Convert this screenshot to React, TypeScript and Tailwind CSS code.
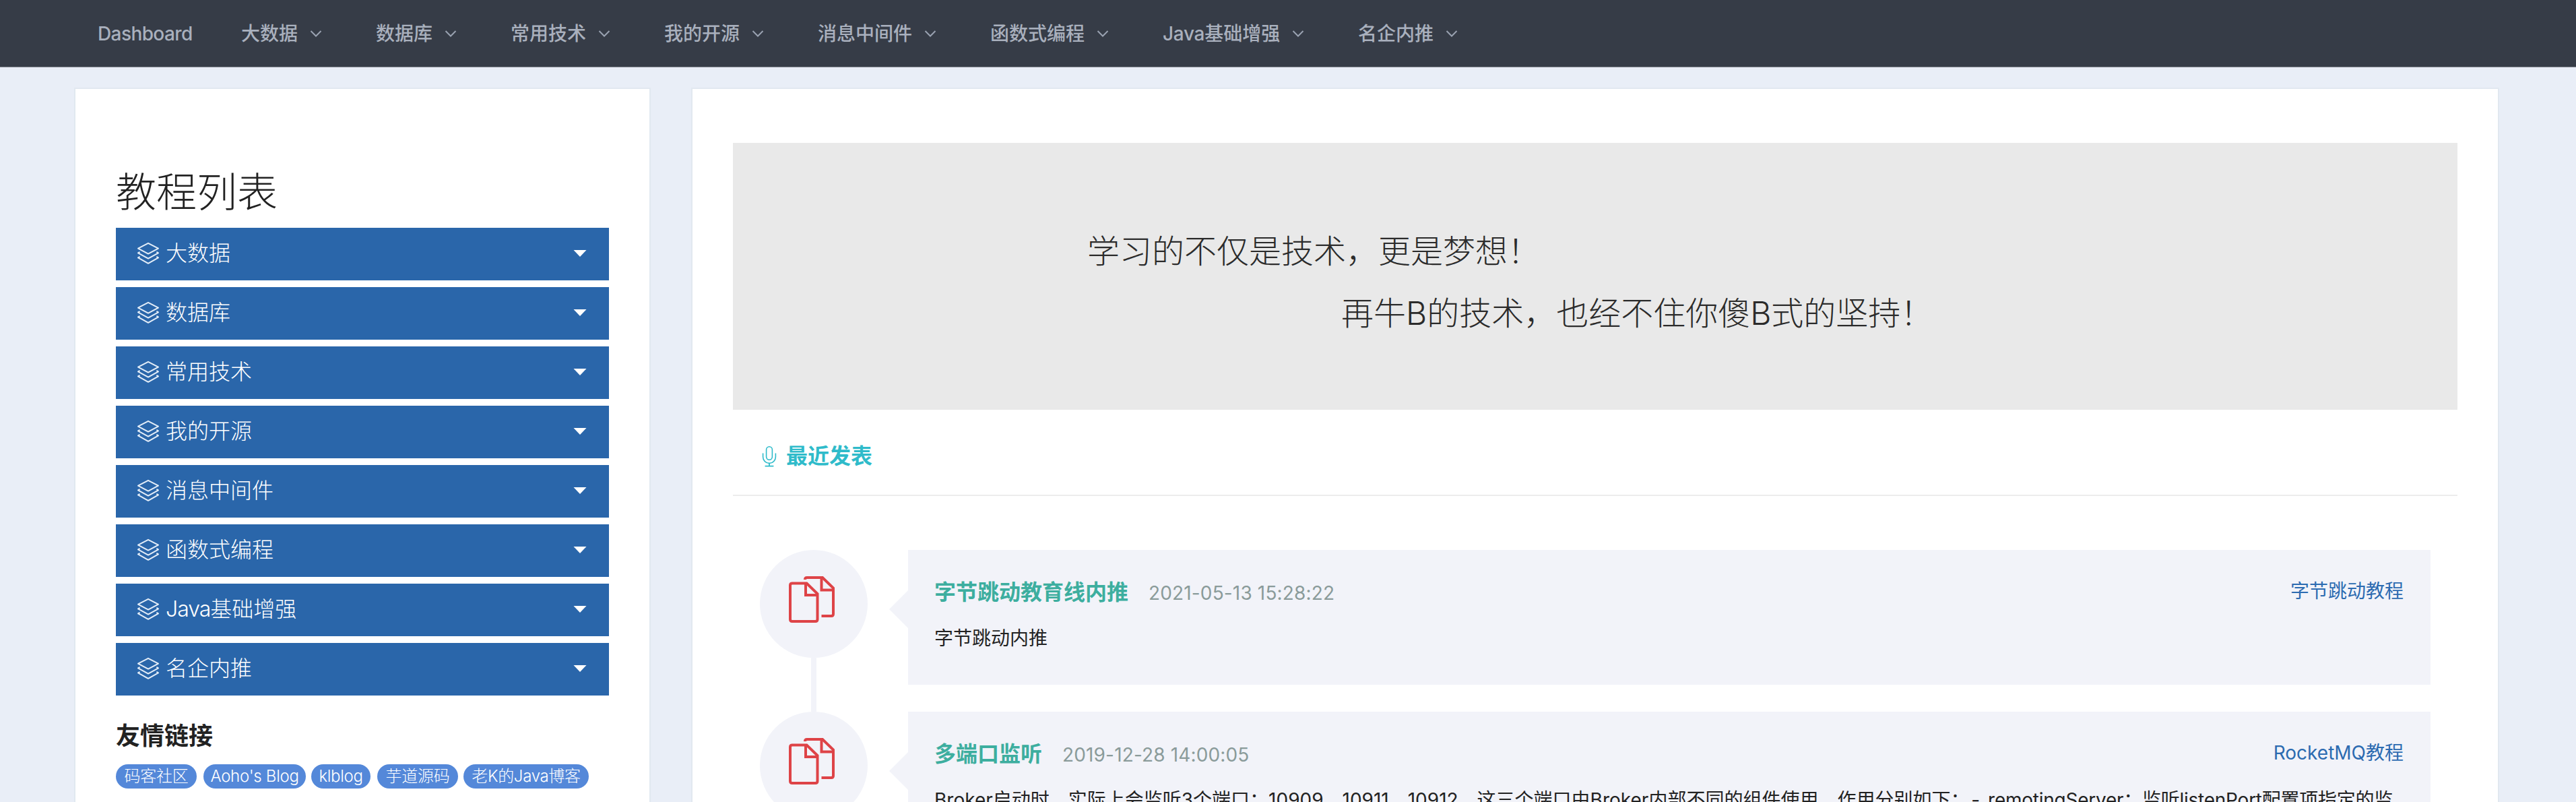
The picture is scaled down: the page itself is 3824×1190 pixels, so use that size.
import React from "react";

type NavItem = { latin?: string; label: string; width: string };

const navItems: NavItem[] = [
  { label: "大数据", width: "w-[84px]" },
  { label: "数据库", width: "w-[84px]" },
  { label: "常用技术", width: "w-[112px]" },
  { label: "我的开源", width: "w-[112px]" },
  { label: "消息中间件", width: "w-[140px]" },
  { label: "函数式编程", width: "w-[140px]" },
  { latin: "Java", label: "基础增强", width: "w-[174px]" },
  { label: "名企内推", width: "w-[112px]" },
];

const links = [
  { label: "码客社区", box: "w-[120px] mr-[10px]" },
  { label: "Aoho's Blog", box: "w-[152px] mr-[8px]" },
  { label: "klblog", box: "w-[88px] mr-[10px]" },
  { label: "芋道源码", box: "w-[120px] mr-[8px]" },
  { label: "老K的Java博客", box: "w-[186px]" },
];

const posts = [
  {
    title: "字节跳动教育线内推",
    date: "2021-05-13 15:28:22",
    category: "字节跳动教程",
    body: <>字节跳动内推</>,
  },
  {
    title: "多端口监听",
    date: "2019-12-28 14:00:05",
    category: "RocketMQ教程",
    body: (
      <>
        Broker启动时，实际上会监听3个端口：10909、10911、10912，这三个端口由Broker内部不同的组件使用，作用分别如下
        <span className="tracking-[-5px]">：</span> <span className="tracking-[4px]">-</span>{" "}
        <span className="tracking-[-0.25px]">remotingServer：监听listenPort配置项指定的监</span>
      </>
    ),
  },
];

function ChevronIcon() {
  return (
    <svg className="ml-[18px] h-[12px] w-[18px]" viewBox="0 0 18 12" fill="none" stroke="#9aa3b2" strokeWidth="2">
      <path d="M1.5 2 L9 9.5 L16.5 2" />
    </svg>
  );
}

function LayersIcon() {
  return (
    <svg className="h-[34px] w-[34px]" viewBox="0 0 34 34" fill="none" stroke="#e3edf8" strokeWidth="2" strokeLinejoin="round">
      <path d="M17 1.8 L32 9.6 L17 17.6 L2 9.6 Z" />
      <path d="M4.6 14.8 L2 16.4 L17 24.6 L32 16.4 L29.4 14.8" />
      <path d="M4.6 21.8 L2 23.4 L17 31.8 L32 23.4 L29.4 21.8" />
    </svg>
  );
}

function MicIcon() {
  return (
    <svg className="h-[32px] w-[22px]" viewBox="0 0 22 32" fill="none" stroke="#2fbbca" strokeWidth="1.6">
      <rect x="6.6" y="1.8" width="8.8" height="19.4" rx="4.4" />
      <path d="M1.6 11.5 V17 A9.4 9.4 0 0 0 20.4 17 V11.5" />
      <path d="M11 26.5 V30.4 M4.6 30.6 H17.4" strokeWidth="1.8" />
    </svg>
  );
}

function CopyIcon() {
  return (
    <svg className="h-[70px] w-[70px]" viewBox="0 0 70 70" fill="none" stroke="#de4347" strokeWidth="4">
      <path d="M5 10.5 H27.5 L43.5 26 V64 Q43.5 67 40.5 67 H6 Q3 67 3 64 V13.5 Q3 10.5 6 10.5 Z" />
      <path d="M26 10.5 V28 H44" />
      <path d="M25 5 Q25 2 28 2 H51 L67 17.5 V56 Q67 59 64 59 H49.5" />
      <path d="M49.5 2 V20.5 H67" />
    </svg>
  );
}

function TopNav() {
  return (
    <nav className="flex h-[100px] shrink-0 items-center border-b border-[#8d9199] bg-[#363c47] pt-px pl-[145px] text-[28px] leading-[40px] font-medium text-[#a9b0bd]">
      <a className="w-[213px] tracking-[-0.6px]">Dashboard</a>
      {navItems.map((item) => (
        <a key={item.label} className="mr-[80px] flex items-center">
          <span className={`${item.width} whitespace-nowrap`}>
            {item.latin && <span className="tracking-[-0.3px]">{item.latin}</span>}
            {item.label}
          </span>
          <ChevronIcon />
        </a>
      ))}
    </nav>
  );
}

function Sidebar() {
  return (
    <aside className="h-[1200px] w-[856px] shrink-0 border-2 border-[#e1e8f0] bg-white px-[60px] pt-[113px] text-[#222]">
      <h1 className="h-[93px] text-[60px] leading-[80px] font-light">教程列表</h1>
      <ul className="flex flex-col gap-[10px]">
        {navItems.map((item) => (
          <li
            key={item.label}
            className="flex h-[78px] items-center bg-[#2a66aa] pr-[33px] pb-[2px] pl-[31px] text-[32px] leading-[48px] font-light text-white"
          >
            <LayersIcon />
            <span className="ml-[9px] grow">
              {item.latin && <span className="tracking-[-1px]">{item.latin}</span>}
              {item.label}
            </span>
            <svg className="h-[10px] w-[20px]" viewBox="0 0 20 10" fill="white">
              <path d="M0.5 0 H19.5 L10 10 Z" />
            </svg>
          </li>
        ))}
      </ul>
      <h2 className="mt-[35px] text-[36px] leading-[50px] font-bold">友情链接</h2>
      <div className="mt-[17px] flex text-[24px] leading-[36px] font-light text-white">
        {links.map((link) => (
          <a key={link.label} className={`${link.box} h-[36px] rounded-full bg-[#5488d9] text-center tracking-[-0.3px] whitespace-nowrap`}>
            {link.label}
          </a>
        ))}
      </div>
    </aside>
  );
}

function Post({ post, last }: { post: (typeof posts)[number]; last: boolean }) {
  return (
    <article className="flex h-[240px]">
      <div className="flex w-[160px] flex-col items-center">
        <div className="flex h-[160px] w-[160px] shrink-0 items-center justify-center rounded-full bg-[#f2f3f9] pr-[6px] pb-[12px]">
          <CopyIcon />
        </div>
        {!last && <div className="h-[80px] w-[8px] bg-[#f2f3f9]" />}
      </div>
      <svg className="mt-[60px] ml-[32px] h-[56px] w-[28px]" viewBox="0 0 28 56" fill="#f2f3f9">
        <path d="M28 0 V56 L0 28 Z" />
      </svg>
      <div className="h-[200px] w-[2260px] bg-[#f2f3f9] pt-[39px] pr-[40px] pl-[39px] text-[28px] leading-[48px] text-[#222]">
        <header className="flex h-[48px]">
          <h3 className="text-[32px] font-bold text-[#3dae9f]">{post.title}</h3>
          <time className="ml-[30px] grow pt-px tracking-[0.15px] text-[#8a9b9a]">{post.date}</time>
          <a className="-mt-[2px] text-[#2c6bb1]">{post.category}</a>
        </header>
        <p className="mt-[20px] whitespace-nowrap">{post.body}</p>
      </div>
    </article>
  );
}

function MainPanel() {
  return (
    <main className="h-[1200px] w-[2684px] shrink-0 border-2 border-[#e1e8f0] bg-white px-[60px] pt-[80px]">
      <section className="h-[396px] bg-[#e9e9e9] pt-[115px] text-[48px] leading-[92px] font-light text-[#2b2b2b]">
        <p className="pl-[526px]">学习的不仅是技术，更是梦想！</p>
        <p className="pl-[903px]">再牛B的技术，也经不住你傻B式的坚持！</p>
      </section>
      <header className="flex h-[128px] items-center border-b-2 border-[#ececec] pt-[12px] pl-[43px] text-[32px] leading-[48px] font-bold text-[#2fbbca]">
        <MicIcon />
        <h2 className="ml-[14px]">最近发表</h2>
      </header>
      <div className="pt-[80px] pl-[40px]">
        {posts.map((post, i) => (
          <Post key={post.title} post={post} last={i === posts.length - 1} />
        ))}
      </div>
    </main>
  );
}

export default function App() {
  return (
    <div className="flex h-[1190px] w-[3824px] flex-col overflow-hidden bg-[#e9eef7] font-['Inter','Noto_Sans_CJK_SC',sans-serif]">
      <TopNav />
      <div className="flex gap-[60px] pt-[30px] pl-[110px]">
        <Sidebar />
        <MainPanel />
      </div>
    </div>
  );
}
